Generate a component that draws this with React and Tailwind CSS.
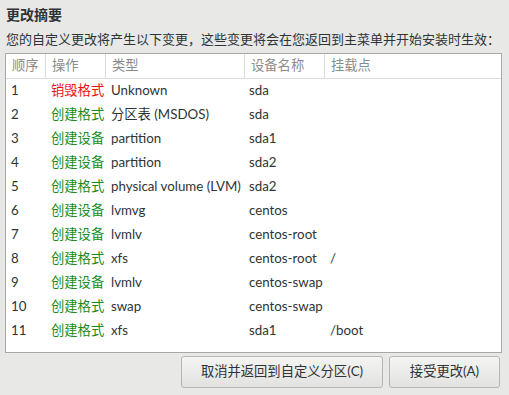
import React from 'react';

const rows = [
  { n: '1', op: '销毁格式', destroy: true, type: 'Unknown', dev: 'sda', mount: '' },
  { n: '2', op: '创建格式', type: '分区表 (MSDOS)', dev: 'sda', mount: '' },
  { n: '3', op: '创建设备', type: 'partition', dev: 'sda1', mount: '' },
  { n: '4', op: '创建设备', type: 'partition', dev: 'sda2', mount: '' },
  { n: '5', op: '创建格式', type: 'physical volume (LVM)', dev: 'sda2', mount: '' },
  { n: '6', op: '创建设备', type: 'lvmvg', dev: 'centos', mount: '' },
  { n: '7', op: '创建设备', type: 'lvmlv', dev: 'centos-root', mount: '' },
  { n: '8', op: '创建格式', type: 'xfs', dev: 'centos-root', mount: '/' },
  { n: '9', op: '创建设备', type: 'lvmlv', dev: 'centos-swap', mount: '' },
  { n: '10', op: '创建格式', type: 'swap', dev: 'centos-swap', mount: '' },
  { n: '11', op: '创建格式', type: 'xfs', dev: 'sda1', mount: '/boot' },
];

const headers = ['顺序', '操作', '类型', '设备名称', '挂载点'];

function App() {
  return (
    <div
      className="w-[509px] h-[395px] bg-[#e8e8e7] text-[#2e3436] text-[13.3px] overflow-hidden"
      style={{ fontFamily: 'Lato, "Noto Sans CJK SC", sans-serif' }}
    >
      <div className="pl-[6px] pt-[4px]">
        <div className="font-bold text-[14px] leading-[22px]">更改摘要</div>
        <div className="mt-[2px] leading-[22px] whitespace-nowrap text-[13px]">
          您的自定义更改将产生以下变更，这些变更将会在您返回到主菜单并开始安装时生效：
        </div>
      </div>

      {/* Table */}
      <div className="mt-[3px] ml-[5px] w-[497px] h-[300px] bg-white border border-[#a8a8a8]">
        <div className="grid grid-cols-[40px_60px_139px_80px_1fr] h-[25px] border-b border-[#dcdcdc] text-[#8a8c8a]">
          {headers.map((h, i) => (
            <div
              key={h}
              className={`flex items-center pl-[6px] ${i < headers.length - 1 ? 'border-r border-[#dcdcdc]' : ''}`}
            >
              {h}
            </div>
          ))}
        </div>
        {rows.map((r) => (
          <div key={r.n} className="grid grid-cols-[40px_60px_139px_80px_1fr] h-[24px] items-center">
            <div className="pl-[5px]">{r.n}</div>
            <div className={`pl-[5px] ${r.destroy ? 'text-[#ee1111]' : 'text-[#188c18]'}`}>{r.op}</div>
            <div className="pl-[5px] whitespace-nowrap">{r.type}</div>
            <div className="pl-[4px] whitespace-nowrap">{r.dev}</div>
            <div className="pl-[5px]">{r.mount}</div>
          </div>
        ))}
      </div>

      {/* Buttons */}
      <div className="flex justify-end gap-[6px] pr-[9px] mt-[3px]">
        <button className="w-[202px] h-[32px] rounded-[3px] border border-[#b6b6b3] bg-gradient-to-b from-[#f4f4f3] to-[#e2e2e0]">
          取消并返回到自定义分区(C)
        </button>
        <button className="w-[111px] h-[32px] rounded-[3px] border border-[#b6b6b3] bg-gradient-to-b from-[#f4f4f3] to-[#e2e2e0]">
          接受更改(A)
        </button>
      </div>
    </div>
  );
}

export default App;
